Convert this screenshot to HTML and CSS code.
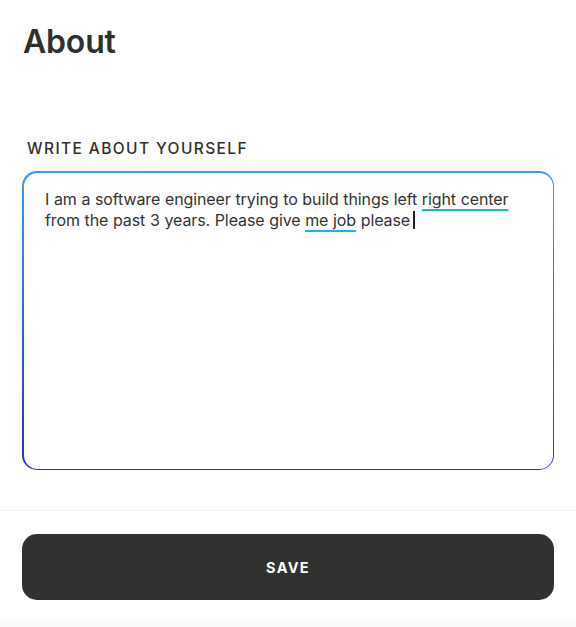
FILE: index.html
```html
<!DOCTYPE html>
<html lang="en">
<head>
<meta charset="utf-8">
<title>About</title>
<link rel="stylesheet" href="styles.css">
</head>
<body>
<div class="page">
  <main class="content">
    <h1 class="title">About</h1>
    <label class="label" for="bio">WRITE ABOUT YOURSELF</label>
    <div class="field" id="bio">
      <div class="field-inner">
        <p class="bio-text">I am a software engineer trying to build things left <span class="spell">right center</span> from the past 3 years. Please give <span class="spell">me job</span> please<span class="caret"></span></p>
      </div>
    </div>
  </main>
  <footer class="footer">
    <button class="save" type="button">SAVE</button>
  </footer>
  <div class="bottom-strip"></div>
</div>
</body>
</html>
```
FILE: styles.css
```css
* { box-sizing: border-box; }
html, body { margin: 0; padding: 0; background: #ffffff; }
body {
  font-family: "Inter", "Noto Sans", "Liberation Sans", sans-serif;
  color: #2f302e;
}
.page {
  width: 576px;
  height: 627px;
  display: flex;
  flex-direction: column;
}
.content {
  padding: 24px 22px 0 22px;
  flex: 0 0 auto;
  display: flex;
  flex-direction: column;
}
.title {
  margin: 0 0 0 1px;
  font-size: 32px;
  line-height: 36px;
  font-weight: 600;
  letter-spacing: -0.2px;
  color: #2f302e;
}
.label {
  margin: 80px 0 0 5px;
  font-size: 15.5px;
  line-height: 18px;
  font-weight: 500;
  letter-spacing: 1.4px;
  color: #2f302e;
}
.field {
  margin-top: 13px;
  height: 299px;
  border-radius: 15px;
  padding: 1.5px;
  background: linear-gradient(180deg, #3d9cf0 0%, #2a2ec0 100%);
}
.field-inner {
  height: 100%;
  background: #fff;
  border-radius: 13.5px;
  padding: 16px 20px 0 21.5px;
}
.bio-text {
  margin: 0;
  font-size: 16px;
  line-height: 21px;
  color: #333432;
  letter-spacing: -0.1px;
  word-spacing: 0.3px;
}
.spell {
  text-decoration: underline;
  text-decoration-color: #14b6df;
  text-decoration-thickness: 2px;
  text-underline-offset: 4px;
}
.caret {
  display: inline-block;
  width: 2px;
  height: 18px;
  background: #222;
  margin-left: 3px;
  vertical-align: -3px;
}
.footer {
  margin-top: 40px;
  border-top: 1px solid #f1f1f1;
  padding: 23px 22px 0 22px;
  flex: 1 1 auto;
}
.save {
  display: block;
  width: 100%;
  height: 66px;
  border: none;
  border-radius: 15px;
  background: #313230;
  color: #ffffff;
  font-family: "Inter", "Noto Sans", "Liberation Sans", sans-serif;
  font-size: 14.5px;
  font-weight: 700;
  letter-spacing: 1.3px;
  cursor: pointer;
}
.bottom-strip {
  height: 8px;
  background: #f9faf9;
  flex: 0 0 auto;
}
```
